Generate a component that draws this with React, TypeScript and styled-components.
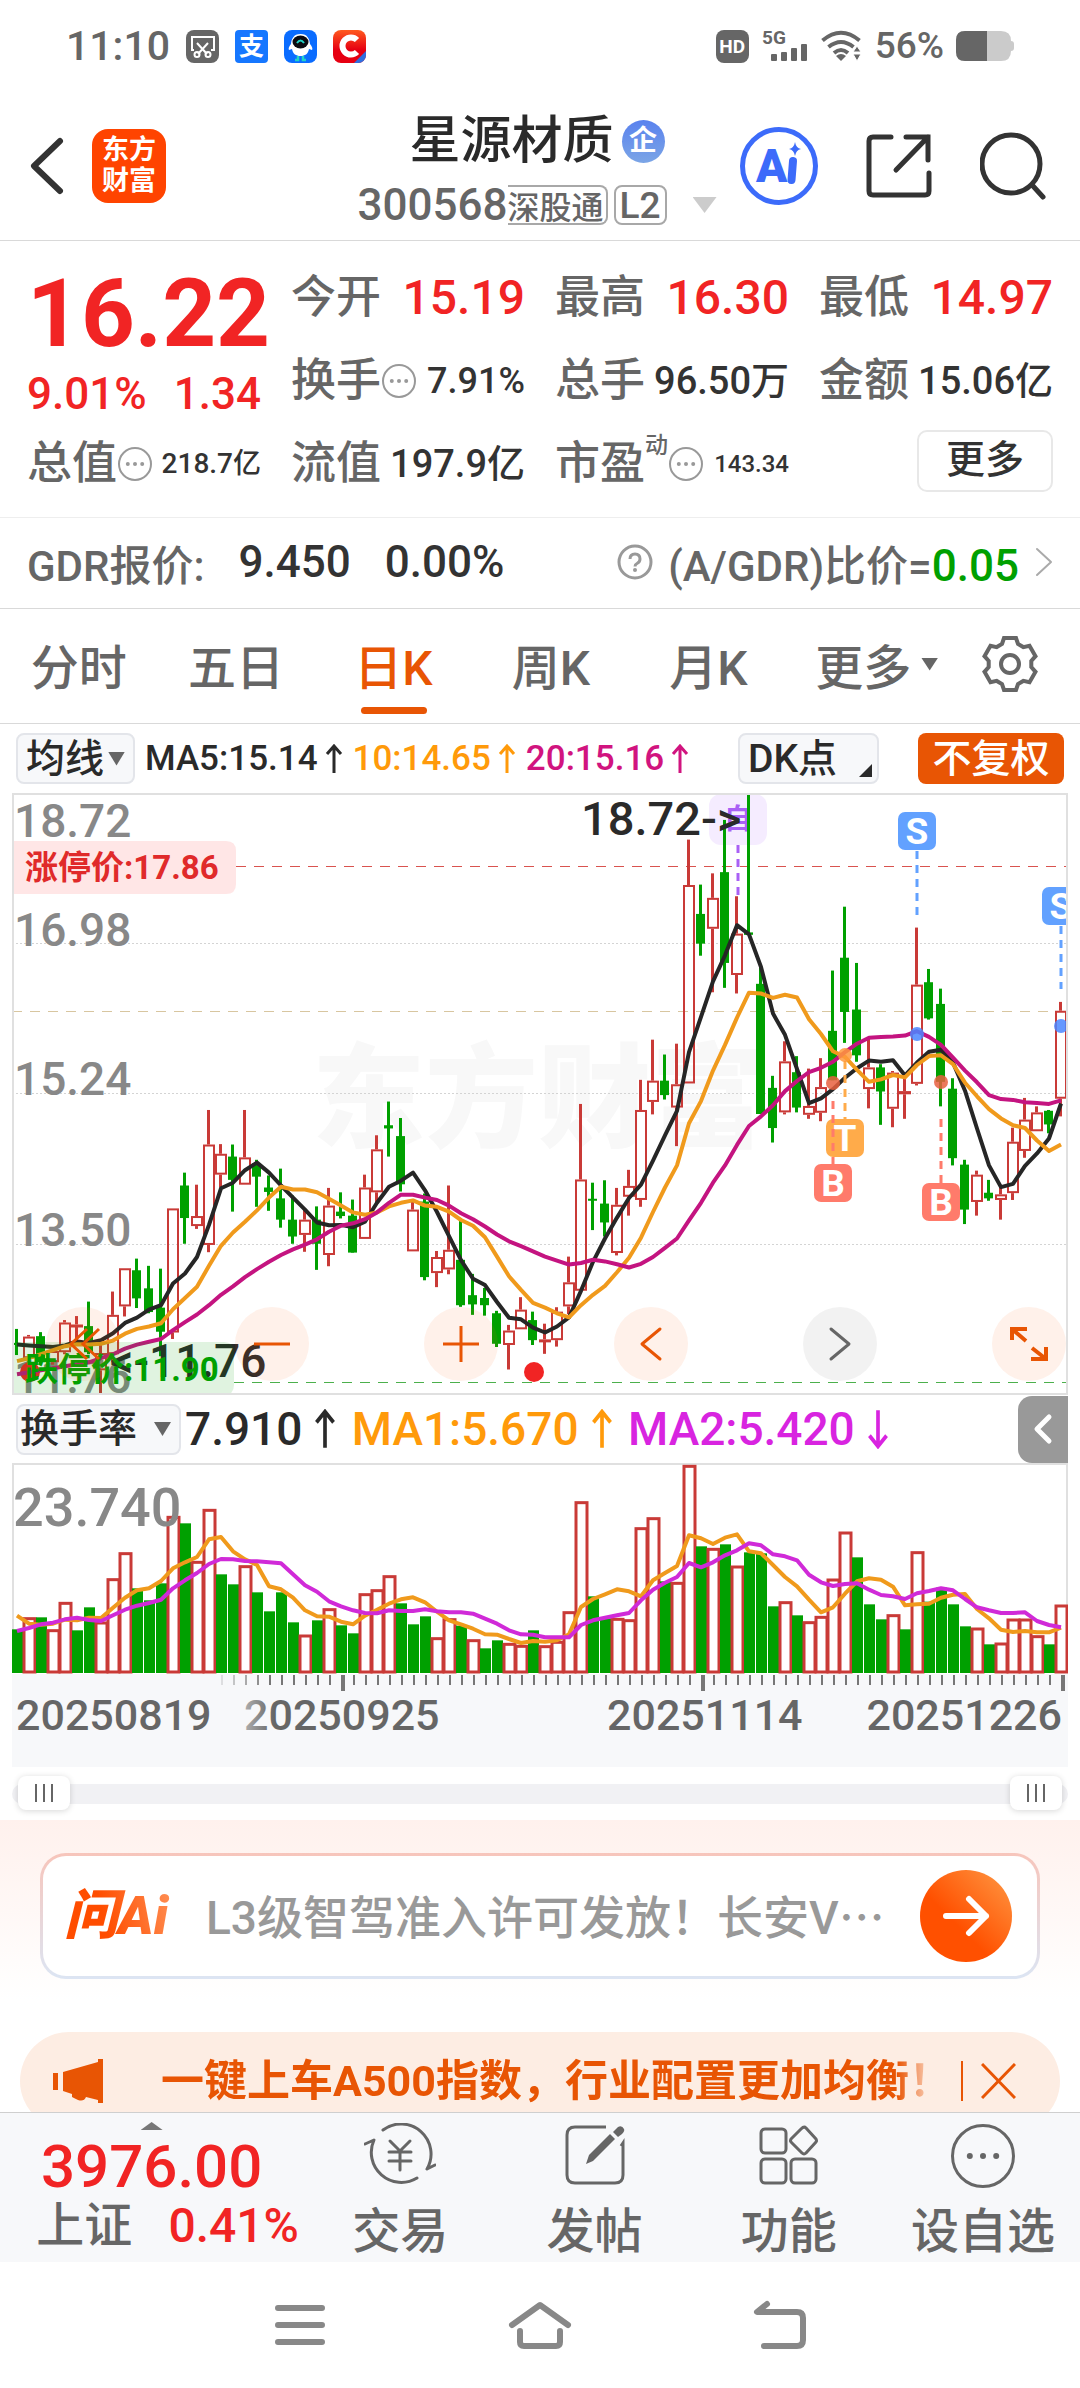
import React, { useState } from "react";
import styled, { createGlobalStyle, css } from "styled-components";

const C = {
  red: "#f12424",
  up: "#c93a37",
  down: "#00a000",
  green: "#00a000",
  ink: "#2a2a2a",
  text: "#666666",
  muted: "#888888",
  orange: "#e85504",
  amber: "#ff9a0a",
  magenta: "#d1147f",
  violet: "#d824e0",
  panel: "#f7f8fa",
  line: "#d9d9d9",
};

const GlobalStyle = createGlobalStyle`
  *, *::before, *::after { box-sizing: border-box; }
  html, body { margin: 0; padding: 0; background: #ffffff; }
  body, button, input, select {
    font-family: Roboto, "Noto Sans CJK SC", sans-serif;
    font-weight: 500;
  }
  body { color: ${C.text}; }
  button { border: 0; padding: 0; background: none; color: inherit; cursor: pointer; }
`;

const Page = styled.div`
  display: flex;
  flex-direction: column;
  width: 100%;
`;

/* ---------- status bar ---------- */

const StatusBar = styled.div`
  display: flex;
  align-items: center;
  justify-content: space-between;
  height: 92px;
  padding: 0 66px;
`;

const StatusGroup = styled.div<{ $gap: number }>`
  display: flex;
  align-items: center;
  gap: ${(p) => p.$gap}px;
`;

const Clock = styled.span`
  font-size: 41px;
  line-height: 42px;
`;

const Percent = styled.span`
  font-size: 37px;
  line-height: 38px;
`;

/* ---------- title bar ---------- */

const TitleBar = styled.header`
  display: flex;
  align-items: center;
  height: 149px;
  padding: 0 34px 0 28px;
  border-bottom: 1px solid ${C.line};
`;

const TitleSide = styled.div<{ $gap: number; $end?: boolean }>`
  flex: 1 1 0;
  display: flex;
  align-items: center;
  justify-content: ${(p) => (p.$end ? "flex-end" : "flex-start")};
  gap: ${(p) => p.$gap}px;
`;

const IconButton = styled.button`
  display: flex;
  align-items: center;
  justify-content: center;
`;

const Logo = styled.a`
  display: flex;
  align-items: center;
  justify-content: center;
  width: 74px;
  height: 74px;
  border-radius: 16px;
  background: #ff4400;
  color: #ffffff;
  font-size: 27px;
  line-height: 31px;
  font-weight: 700;
  text-align: center;
  text-decoration: none;
`;

const TitleCenter = styled.div`
  display: flex;
  flex-direction: column;
  align-items: center;
  padding-top: 12px;
`;

const StockName = styled.h1`
  display: flex;
  align-items: center;
  gap: 8px;
  margin: 0;
  color: ${C.ink};
  font-size: 51px;
  line-height: 66px;
  font-weight: 500;
`;

const NameBadge = styled.span`
  display: flex;
  align-items: center;
  justify-content: center;
  width: 43px;
  height: 43px;
  border-radius: 50%;
  background: linear-gradient(#5a82ee, #7ba5e6);
  color: #ffffff;
  font-size: 28px;
  line-height: 40px;
  font-weight: 700;
`;

const CodeRow = styled.div`
  display: flex;
  align-items: center;
  height: 62px;
  font-size: 44px;
`;

const CodeTag = styled.span<{ $open?: boolean }>`
  display: flex;
  align-items: center;
  height: 40px;
  margin-right: 6px;
  padding: 0 ${(p) => (p.$open ? 2 : 4)}px;
  border: 2px solid #a8a8a8;
  border-radius: 8px;
  font-size: ${(p) => (p.$open ? 32 : 37)}px;
  ${(p) =>
    p.$open &&
    css`
      border-left: 0;
      border-radius: 0 8px 8px 0;
      padding-left: 0;
    `}
`;

const Triangle = styled.span<{ $w: number; $h: number; $color: string; $up?: boolean }>`
  flex: none;
  width: ${(p) => p.$w}px;
  height: ${(p) => p.$h}px;
  background: ${(p) => p.$color};
  clip-path: ${(p) => (p.$up ? "polygon(0 100%, 50% 0, 100% 100%)" : "polygon(0 0, 100% 0, 50% 100%)")};
`;

const CodeArrow = styled(Triangle)`
  margin-left: 20px;
`;

const AiRound = styled.button`
  display: flex;
  align-items: center;
  justify-content: center;
  width: 78px;
  height: 78px;
  border: 5px solid #3c6bfa;
  border-radius: 50%;
`;

/* ---------- quote panel ---------- */

const Quote = styled.section`
  display: grid;
  grid-template-columns: repeat(4, minmax(0, 1fr));
  grid-template-rows: repeat(3, 83px);
  column-gap: 30px;
  padding: 15px 27px 12px;
  border-bottom: 1px solid #eeeeee;
`;

const PriceBlock = styled.div`
  grid-row: span 2;
  color: ${C.red};
`;

const Price = styled.div`
  height: 111px;
  font-size: 94px;
  line-height: 116px;
  font-weight: 700;
`;

const Change = styled.div`
  display: flex;
  justify-content: space-between;
  font-size: 44px;
  line-height: 54px;
`;

const Metric = styled.div`
  display: flex;
  align-items: center;
  justify-content: space-between;
  white-space: nowrap;
`;

const MetricLabel = styled.span`
  display: flex;
  align-items: center;
  font-size: 45px;
  line-height: 60px;
`;

const MetricValue = styled.span<{ $size: number; $red?: boolean }>`
  color: ${(p) => (p.$red ? C.red : "#333333")};
  font-size: ${(p) => p.$size}px;
  line-height: 60px;
`;

const Sup = styled.span`
  align-self: flex-start;
  font-size: 23px;
  line-height: 24px;
`;

const MoreButton = styled.button`
  justify-self: end;
  align-self: center;
  width: 136px;
  height: 62px;
  margin-bottom: 6px;
  padding-bottom: 2px;
  border: 2px solid #e8e8e8;
  border-radius: 10px;
  color: #333333;
  font-size: 39px;
  line-height: 56px;
`;

const GdrRow = styled.section`
  display: flex;
  align-items: center;
  height: 91px;
  padding: 0 27px 2px;
  border-bottom: 1px solid ${C.line};
  font-size: 42px;
  white-space: nowrap;
`;

const GdrValue = styled.span`
  margin-left: 34px;
  color: #333333;
  font-size: 44px;
`;

const GdrLink = styled.a`
  display: flex;
  align-items: center;
  margin-left: auto;
  color: ${C.text};
  text-decoration: none;
`;

const GdrFormula = styled.span`
  margin: 0 16px 0 14px;
`;

const Ratio = styled.span`
  color: ${C.green};
  font-size: 44px;
`;

/* ---------- period tabs ---------- */

const Tabs = styled.nav`
  display: grid;
  grid-template-columns: repeat(5, minmax(0, 158fr)) minmax(0, 180fr) minmax(0, 88fr);
  height: 115px;
  padding-right: 26px;
  border-bottom: 1px solid ${C.line};
`;

const Tab = styled.button<{ $on?: boolean }>`
  position: relative;
  display: flex;
  align-items: center;
  justify-content: center;
  gap: 10px;
  padding-bottom: 4px;
  color: ${(p) => (p.$on ? C.orange : C.text)};
  font-size: 48px;
  white-space: nowrap;
  ${(p) =>
    p.$on &&
    css`
      &::after {
        content: "";
        position: absolute;
        left: 50%;
        bottom: 9px;
        width: 66px;
        height: 7px;
        margin-left: -33px;
        border-radius: 4px;
        background: ${C.orange};
      }
    `}
`;

/* ---------- indicator rows ---------- */

const IndicatorRow = styled.div<{ $h: number; $size: number; $gap: number }>`
  display: flex;
  align-items: center;
  gap: ${(p) => p.$gap}px;
  height: ${(p) => p.$h}px;
  padding: 0 16px;
  font-size: ${(p) => p.$size}px;
  white-space: nowrap;
`;

const SelectBox = styled.label<{ $w: number; $push?: boolean }>`
  display: grid;
  align-items: center;
  width: ${(p) => p.$w}px;
  height: 51px;
  margin-left: ${(p) => (p.$push ? "auto" : "0")};
  border: 2px solid #e3e5ea;
  border-radius: 8px;
  background: ${C.panel};
  overflow: hidden;

  & > * {
    grid-area: 1 / 1;
  }
`;

const Select = styled.select<{ $pad: number }>`
  appearance: none;
  width: 100%;
  height: 100%;
  padding: 0 0 0 ${(p) => p.$pad}px;
  border: 0;
  background: none;
  color: ${C.ink};
  font-size: 39px;
  line-height: 46px;
`;

const SelectArrow = styled(Triangle)`
  justify-self: end;
  margin-right: 8px;
  pointer-events: none;
`;

const CornerMark = styled.span`
  justify-self: end;
  align-self: end;
  width: 13px;
  height: 13px;
  margin: 0 5px 5px 0;
  background: ${C.ink};
  clip-path: polygon(100% 0, 100% 100%, 0 100%);
  pointer-events: none;
`;

const Reading = styled.span<{ $color: string; $gap: number }>`
  display: flex;
  align-items: center;
  gap: ${(p) => p.$gap}px;
  color: ${(p) => p.$color};
`;

const AdjustButton = styled.button`
  width: 146px;
  height: 51px;
  margin-left: 29px;
  border-radius: 8px;
  background: ${C.orange};
  color: #ffffff;
  font-size: 39px;
  line-height: 50px;
`;

const CollapseButton = styled.button`
  display: flex;
  align-items: center;
  justify-content: center;
  width: 50px;
  height: 67px;
  margin: 0 -4px 0 auto;
  border-radius: 14px 0 0 14px;
  background: #999999;
`;

/* ---------- charts ---------- */

const ChartArea = styled.div`
  position: relative;
  margin: 0 12px;
`;

const ChartSvg = styled.svg`
  display: block;
  width: 100%;
  height: auto;
`;

const ChartControls = styled.div`
  position: absolute;
  left: 0;
  right: 0;
  bottom: 14px;
  display: flex;
  justify-content: space-between;
  padding: 0 2px 0 34px;
`;

const RoundButton = styled.button<{ $grey?: boolean }>`
  display: flex;
  align-items: center;
  justify-content: center;
  width: 74px;
  height: 74px;
  border-radius: 50%;
  background: ${(p) => (p.$grey ? "rgba(0, 0, 0, 0.05)" : "rgba(255, 105, 20, 0.09)")};
`;

const Range = styled.div`
  position: relative;
  height: 53px;
  margin: 0 12px;

  &::before {
    content: "";
    position: absolute;
    inset: 17px 0 16px;
    border-radius: 10px;
    background: #f1f1f4;
  }
`;

const thumb = css`
  appearance: none;
  width: 52px;
  height: 34px;
  border: 0;
  border-radius: 8px;
  background:
    linear-gradient(#666, #666) 17px 50% / 2px 18px no-repeat,
    linear-gradient(#666, #666) 25px 50% / 2px 18px no-repeat,
    linear-gradient(#666, #666) 33px 50% / 2px 18px no-repeat,
    #ffffff;
  box-shadow: 0 1px 6px rgba(0, 0, 0, 0.16);
  pointer-events: auto;
`;

const RangeInput = styled.input`
  position: absolute;
  inset: 0 6px;
  appearance: none;
  width: calc(100% - 12px);
  height: 52px;
  margin: 0;
  background: none;
  pointer-events: none;

  &::-webkit-slider-thumb {
    ${thumb}
  }
  &::-moz-range-thumb {
    ${thumb}
  }
`;

/* ---------- assistant card ---------- */

const Assistant = styled.section`
  height: 212px;
  padding: 33px 40px;
  background: linear-gradient(#fff1ed, #ffffff 85%);
`;

const AskCard = styled.form`
  display: flex;
  align-items: center;
  height: 126px;
  padding: 0 25px 0 21px;
  border: 3px solid transparent;
  border-radius: 26px;
  background:
    linear-gradient(#ffffff, #ffffff) padding-box,
    linear-gradient(#f7c5bb, #dce5f3) border-box;
`;

const AskLogo = styled.span`
  flex: none;
  width: 142px;
  background: linear-gradient(75deg, #ff4d00 30%, #ff9055 78%);
  background-clip: text;
  color: transparent;
  font-size: 54px;
  line-height: 64px;
  font-weight: 900;
  font-style: italic;
`;

const AskInput = styled.input`
  flex: 1;
  min-width: 0;
  height: 80px;
  padding: 4px 0 0;
  border: 0;
  outline: 0;
  background: none;
  color: ${C.ink};
  font-size: 46px;

  &::placeholder {
    color: #999999;
    opacity: 1;
  }
`;

const AskSend = styled.button`
  display: flex;
  align-items: center;
  justify-content: center;
  flex: none;
  width: 92px;
  height: 92px;
  border-radius: 50%;
  background: linear-gradient(45deg, #ff5000 40%, #ff9a45);
`;

const NoticeWrap = styled.section`
  height: 80px;
  padding: 0 20px;
  overflow: hidden;
`;

const Notice = styled.div`
  display: flex;
  align-items: center;
  height: 98px;
  padding: 0 44px 0 32px;
  border-radius: 49px;
  background: #fdede3;
`;

const NoticeText = styled.a`
  flex: 1;
  min-width: 0;
  margin-left: 56px;
  overflow: hidden;
  color: ${C.orange};
  font-size: 43px;
  line-height: 60px;
  font-weight: 700;
  text-decoration: none;
  white-space: nowrap;
  mask-image: linear-gradient(90deg, #000 92%, rgba(0, 0, 0, 0.2) 96%);
`;

const NoticeRule = styled.span`
  width: 2px;
  height: 40px;
  margin-right: 18px;
  background: ${C.orange};
`;

/* ---------- bottom bar ---------- */

const BottomBar = styled.footer`
  display: grid;
  grid-template-columns: minmax(0, 303fr) repeat(4, minmax(0, 194fr));
  height: 150px;
  border-top: 1px solid #cfcfcf;
  background: ${C.panel};
`;

const IndexCell = styled.button`
  display: flex;
  flex-direction: column;
  align-items: center;
  padding-top: 9px;
`;

const IndexValue = styled.span`
  color: ${C.red};
  font-size: 60px;
  line-height: 74px;
`;

const IndexChange = styled.span`
  display: flex;
  align-items: center;
  gap: 36px;
  font-size: 48px;
  line-height: 44px;
  padding-left: 32px;
  white-space: nowrap;
`;

const IndexPct = styled.span`
  color: ${C.red};
`;

const Action = styled.button`
  display: flex;
  flex-direction: column;
  align-items: center;
  gap: 10px;
  padding-top: 10px;
  font-size: 48px;
  line-height: 66px;
  white-space: nowrap;
`;

const SystemNav = styled.nav`
  display: grid;
  grid-template-columns: repeat(3, minmax(0, 1fr));
  align-items: center;
  height: 126px;
  padding: 0 16.6667%;
`;

/* ---------- icons ---------- */

const ScissorsIcon = () => (
  <svg width="33" height="33" viewBox="0 0 33 33" aria-hidden="true">
    <rect width="33" height="33" rx="8" fill="#666" />
    <g fill="none" stroke="#fff" strokeWidth="2">
      <path d="M8 20H6V7h22v13h-3" />
      <path d="M11 13l10 11M22 13L12 24" />
      <circle cx="11" cy="24.500" r="2.500" />
      <circle cx="22" cy="24.500" r="2.500" />
    </g>
  </svg>
);

const AppBadge = styled.span<{ $bg: string; $radius: number; $size: number }>`
  display: flex;
  align-items: center;
  justify-content: center;
  width: 33px;
  height: 33px;
  border-radius: ${(p) => p.$radius}px;
  background: ${(p) => p.$bg};
  color: #ffffff;
  font-size: ${(p) => p.$size}px;
  line-height: 33px;
  font-weight: 700;
`;

const RobotIcon = () => (
  <svg width="33" height="33" viewBox="0 0 33 33" aria-hidden="true">
    <rect width="33" height="33" rx="8" fill="#0a6cff" />
    <path d="M16.500 4c7 0 9 5 9.500 10 2 2 3 5 2 6l-3-1c-1 5-4 7-8.500 7S9 24 8 19l-3 1c-1-1 0-4 2-6 .5-5 2.500-10 9.500-10z" fill="#fff" />
    <ellipse cx="16.500" cy="12" rx="8" ry="6.500" fill="#0b0b12" />
    <path d="M13 13q3.500-5 7 0" fill="none" stroke="#22d3c5" strokeWidth="2" />
    <path d="M14 26v4h-3M19 26v4h3" fill="none" stroke="#22d3c5" strokeWidth="2.500" />
  </svg>
);

const ClipIcon = () => (
  <svg width="33" height="33" viewBox="0 0 33 33" aria-hidden="true">
    <linearGradient id="clipBg" x1="0" x2="0" y1="0" y2="1">
      <stop offset="0" stopColor="#ff5a1f" />
      <stop offset="0.6" stopColor="#e60012" />
    </linearGradient>
    <clipPath id="clipShape"><rect width="33" height="33" rx="8" /></clipPath>
    <g clipPath="url(#clipShape)">
      <rect width="33" height="33" fill="url(#clipBg)" />
      <path d="M24 10A8.500 8.500 0 1 0 24 22" fill="none" stroke="#fff" strokeWidth="6" />
      <path d="M20 34L34 20V34Z" fill="#2f6fe0" />
    </g>
  </svg>
);

const SignalIcon = () => (
  <svg width="48" height="34" viewBox="0 0 48 34" aria-hidden="true">
    <text x="1" y="15" fontSize="19" fontWeight="700" fill="#666">5G</text>
    <g fill="#666">
      <rect x="10" y="25" width="6" height="7" rx="1" />
      <rect x="20" y="23" width="6" height="9" rx="1" />
      <rect x="30" y="19" width="6" height="13" rx="1" />
      <rect x="40" y="15" width="6" height="17" rx="1" />
    </g>
  </svg>
);

const WifiIcon = () => (
  <svg width="42" height="32" viewBox="0 0 42 32" aria-hidden="true">
    <g fill="none" stroke="#666" strokeWidth="4">
      <path d="M1.500 10.500Q20 -5 38.500 10.500" />
      <path d="M7.500 17Q20 7 32.500 17" />
      <path d="M13 23Q20 17 27 23" />
    </g>
    <path d="M15 26q5-4 10 0l-5 5z" fill="#666" />
    <path d="M32 22l4-6 4 6zM32 24l4 7 4-7z" fill="#666" stroke="#fff" />
  </svg>
);

const BatteryIcon = () => (
  <svg width="58" height="30" viewBox="0 0 58 30" aria-hidden="true">
    <path d="M9 0h36q10 0 10 10v0q3 0 3 3v4q0 3-3 3 0 10-10 10H9q-9 0-9-9V9q0-9 9-9z" fill="#cbcbcb" />
    <path d="M9 0h22v30H9q-9 0-9-9V9q0-9 9-9z" fill="#666" />
  </svg>
);

const Chevron = ({ w, h, stroke, color, right }: { w: number; h: number; stroke: number; color: string; right?: boolean }) => {
  const a = stroke;
  const near = right ? a : w - a;
  const far = right ? w - a : a;
  return (
    <svg width={w} height={h} viewBox={`0 0 ${w} ${h}`} aria-hidden="true">
      <path d={`M${near} ${a}L${far} ${h / 2}L${near} ${h - a}`} fill="none" stroke={color} strokeWidth={stroke} strokeLinecap="round" strokeLinejoin="round" />
    </svg>
  );
};

const ArrowIcon = ({ down, big }: { down?: boolean; big?: boolean }) => (
  <svg width={big ? 22 : 18} height={big ? 40 : 30} viewBox="0 0 18 30" preserveAspectRatio="none" aria-hidden="true">
    <path d={down ? "M9 1V28M2 20L9 28L16 20" : "M9 29V2M2 10L9 2L16 10"} fill="none" stroke="currentColor" strokeWidth="3" />
  </svg>
);

const AiMark = () => (
  <svg width="50" height="50" viewBox="0 0 50 50" aria-hidden="true">
    <text x="2" y="41" fontSize="46" fontWeight="900" fill="#3c6bfa">A</text>
    <path d="M39 20L37.500 39" stroke="#3c6bfa" strokeWidth="8" strokeLinecap="round" />
    <path d="M41 1q1 6 6 7q-5 1-6 7q-1-6-6-7q5-1 6-7z" fill="#3c6bfa" />
  </svg>
);

const ShareIcon = () => (
  <svg width="66" height="66" viewBox="0 0 66 66" fill="none" stroke="#333" strokeWidth="5" aria-hidden="true">
    <path d="M25 4H7Q3 4 3 8V58Q3 62 7 62H59Q63 62 63 58V40" strokeLinecap="round" />
    <path d="M40 4H62V27M62 4L30 37" strokeLinecap="round" />
  </svg>
);

const SearchIcon = () => (
  <svg width="66" height="68" viewBox="0 0 66 68" fill="none" stroke="#333" strokeWidth="5" aria-hidden="true">
    <circle cx="31" cy="32" r="29" />
    <path d="M53 54L63 65" strokeLinecap="round" />
  </svg>
);

const DotsCircle = ({ size, stroke, color, r }: { size: number; stroke: number; color: string; r: number }) => (
  <svg width={size} height={size} viewBox={`0 0 ${size} ${size}`} aria-hidden="true">
    <circle cx={size / 2} cy={size / 2} r={(size - stroke) / 2 - 1} fill="none" stroke={color} strokeWidth={stroke} />
    {[-1, 0, 1].map((k) => (
      <circle key={k} cx={size / 2 + (k * size) / 5} cy={size / 2} r={r} fill={color} />
    ))}
  </svg>
);

const HelpIcon = () => (
  <svg width="38" height="38" viewBox="0 0 38 38" aria-hidden="true">
    <circle cx="19" cy="19" r="16" fill="none" stroke="#999" strokeWidth="3" />
    <path d="M14 16q0-5 5-5t5 5q0 3-3 4.500-2 1-2 3" fill="none" stroke="#999" strokeWidth="3" />
    <circle cx="19" cy="27" r="2" fill="#999" />
  </svg>
);

const GEAR_PATH = (() => {
  const tooth: [number, number][] = [[-8, -20], [-6, -26], [6, -26], [8, -20]];
  const pts: string[] = [];
  for (let k = 0; k < 6; k++) {
    const a = (k * Math.PI) / 3;
    tooth.forEach(([x, y]) => {
      const px = 30 + x * Math.cos(a) - y * Math.sin(a);
      const py = 30 + x * Math.sin(a) + y * Math.cos(a);
      pts.push(`${px.toFixed(1)} ${py.toFixed(1)}`);
    });
  }
  return `M${pts.join("L")}Z`;
})();

const GearIcon = () => (
  <svg width="60" height="60" viewBox="0 0 60 60" fill="none" stroke="#666" strokeWidth="4" aria-hidden="true">
    <path d={GEAR_PATH} />
    <circle cx="30" cy="30" r="9" />
  </svg>
);

const ExpandIcon = () => (
  <svg width="40" height="40" viewBox="0 0 40 40" fill="none" stroke={C.orange} strokeWidth="4" aria-hidden="true">
    <path d="M3 16V5H18M3 5L17 17" />
    <path d="M22 35H37V23M37 35L23 24" />
  </svg>
);

const PlusMinus = ({ plus }: { plus?: boolean }) => (
  <svg width="38" height="38" viewBox="0 0 38 38" stroke={C.orange} strokeWidth="3" aria-hidden="true">
    <path d={plus ? "M1 19H37M19 1V37" : "M1 19H37"} />
  </svg>
);

const DoubleChevron = () => (
  <svg width="36" height="36" viewBox="0 0 36 36" fill="none" stroke={C.orange} strokeWidth="3" aria-hidden="true">
    <path d="M22 3L6 18L22 33M34 3L18 18L34 33" />
  </svg>
);

const SendArrow = () => (
  <svg width="48" height="42" viewBox="0 0 48 42" fill="none" stroke="#fff" strokeWidth="6" strokeLinecap="round" strokeLinejoin="round" aria-hidden="true">
    <path d="M4 21H44M27 4L44 21L27 38" />
  </svg>
);

const MegaphoneIcon = () => (
  <svg width="53" height="44" viewBox="0 0 53 44" fill={C.orange} aria-hidden="true">
    <rect x="1" y="14" width="5" height="17" />
    <path d="M11 13L46 3V0h5v44h-5v-3l-12-3q-2 5-8 3l-6-3v-3l-9-3z" />
  </svg>
);

const CloseIcon = () => (
  <svg width="35" height="36" viewBox="0 0 35 36" stroke={C.orange} strokeWidth="3" aria-hidden="true">
    <path d="M1 1L34 35M34 1L1 35" />
  </svg>
);

const TradeIcon = () => (
  <svg width="72" height="66" viewBox="0 0 72 66" fill="none" stroke="#666" strokeWidth="3" strokeLinecap="round" strokeLinejoin="round" aria-hidden="true">
    <path d="M19 7A30 30 0 0 1 63 46L71 42" />
    <path d="M53 55A30 30 0 0 1 10 17L1 21" />
    <path d="M26 18L36 28L46 18M36 28V47M25 29H47M25 38H47" />
  </svg>
);

const PostIcon = () => (
  <svg width="62" height="66" viewBox="0 0 62 66" fill="none" stroke="#666" strokeWidth="3" aria-hidden="true">
    <path d="M42 4H11Q3 4 3 12V52Q3 60 11 60H51Q59 60 59 52V20L57 23" />
    <path d="M22 41L25 32L46 11L51 16L29 38Z" fill="#666" stroke="none" />
    <path d="M49 9L54 4Q58 2 60 6Q61 8 58 11L54 14Z" fill="#666" stroke="none" />
  </svg>
);

const GridIcon = () => (
  <svg width="60" height="66" viewBox="0 0 60 66" fill="none" stroke="#666" strokeWidth="3" strokeLinejoin="round" aria-hidden="true">
    <rect x="2" y="6" width="25" height="24" rx="4" />
    <rect x="2" y="36" width="25" height="24" rx="4" />
    <rect x="32" y="36" width="25" height="24" rx="4" />
    <path d="M47 5Q45 3 42 6L32 16Q31 18 32 19L43 30Q45 32 47 30L57 19Q58 18 57 16Z" />
  </svg>
);

const MenuIcon = () => (
  <svg width="50" height="42" viewBox="0 0 50 42" stroke="#888" strokeWidth="6" strokeLinecap="round" aria-hidden="true">
    <path d="M3 4H47M3 21H47M3 38H47" />
  </svg>
);

const HomeIcon = () => (
  <svg width="64" height="50" viewBox="0 0 64 50" fill="none" stroke="#888" strokeWidth="6" strokeLinecap="round" strokeLinejoin="round" aria-hidden="true">
    <path d="M4 25L32 5L60 25" />
    <path d="M12 31V42Q12 46 16 46H48Q52 46 52 42V31" />
  </svg>
);

const BackIcon = () => (
  <svg width="56" height="50" viewBox="0 0 56 50" fill="none" stroke="#888" strokeWidth="6" strokeLinecap="round" strokeLinejoin="round" aria-hidden="true">
    <path d="M15 4L5 12H45Q51 12 51 18V40Q51 46 45 46H12" />
  </svg>
);

/* ---------- market data ---------- */

type Side = "r" | "g";
type Candle = [Side, number, number, number, number];

/* side, high, body top, body bottom, low: ticks on a scale where 33 is 18.72 and 1529 is 11.76 */
const CANDLES: Candle[] = [
  ["g", 1367, 1402, 1406, 1432], ["r", 1382, 1386, 1440, 1445], ["g", 1375, 1385, 1450, 1455], ["r", 1418, 1422, 1450, 1456],
  ["r", 1345, 1351, 1425, 1430], ["r", 1335, 1356, 1360, 1395], ["g", 1299, 1360, 1425, 1430], ["r", 1400, 1427, 1470, 1529],
  ["r", 1274, 1332, 1430, 1450], ["r", 1216, 1216, 1311, 1336], ["g", 1192, 1221, 1291, 1315], ["g", 1210, 1266, 1325, 1328],
  ["g", 1217, 1314, 1374, 1435], ["r", 1067, 1067, 1376, 1392], ["g", 978, 1010, 1091, 1155], ["r", 1008, 1086, 1111, 1118],
  ["r", 822, 908, 1158, 1176], ["r", 907, 931, 983, 1015], ["g", 908, 938, 996, 1075], ["r", 822, 940, 1008, 1008],
  ["g", 946, 955, 988, 1063], ["g", 985, 1015, 1026, 1073], ["g", 968, 1042, 1095, 1115], ["g", 1035, 1095, 1137, 1155],
  ["r", 1070, 1095, 1133, 1175], ["g", 1062, 1095, 1155, 1220], ["r", 1016, 1060, 1183, 1211], ["g", 1027, 1075, 1086, 1092],
  ["g", 1045, 1085, 1177, 1177], ["r", 983, 1015, 1143, 1143], ["r", 885, 920, 1027, 1055], ["g", 801, 860, 868, 938],
  ["g", 842, 887, 1007, 1025], ["r", 1050, 1070, 1174, 1174], ["g", 1030, 1050, 1238, 1246], ["r", 1173, 1188, 1228, 1263],
  ["r", 1010, 1170, 1219, 1231], ["g", 1095, 1195, 1308, 1312], ["g", 1230, 1283, 1306, 1332], ["g", 1265, 1290, 1308, 1334],
  ["g", 1322, 1328, 1404, 1412], ["r", 1357, 1371, 1407, 1468], ["r", 1288, 1319, 1368, 1368], ["g", 1324, 1345, 1395, 1407],
  ["r", 1354, 1393, 1397, 1429], ["r", 1313, 1324, 1395, 1411], ["r", 1187, 1251, 1311, 1330], ["r", 807, 995, 1272, 1272],
  ["g", 1003, 1043, 1048, 1121], ["g", 997, 1055, 1102, 1137], ["r", 1016, 1058, 1178, 1184], ["r", 971, 1011, 1038, 1085],
  ["r", 747, 822, 1046, 1063], ["r", 647, 749, 802, 833], ["g", 684, 749, 785, 796], ["r", 657, 758, 816, 912],
  ["r", 149, 262, 756, 756], ["g", 261, 334, 408, 438], ["r", 233, 294, 371, 529], ["g", 100, 230, 456, 518],
  ["r", 290, 383, 486, 532], ["g", 33, 380, 386, 386], ["g", 460, 508, 832, 832], ["g", 737, 767, 867, 903],
  ["r", 651, 701, 828, 833], ["g", 688, 728, 816, 828], ["r", 719, 812, 834, 844], ["r", 693, 765, 829, 850],
  ["g", 475, 625, 748, 748], ["g", 316, 443, 578, 655], ["g", 456, 572, 686, 702], ["r", 642, 716, 770, 818],
  ["g", 708, 716, 776, 859], ["r", 725, 729, 819, 865], ["r", 736, 775, 783, 844], ["r", 368, 510, 757, 761],
  ["g", 471, 504, 594, 597], ["g", 520, 558, 752, 813], ["g", 743, 769, 942, 960], ["g", 946, 958, 1070, 1106],
  ["r", 973, 983, 1051, 1085], ["g", 996, 1028, 1042, 1048], ["r", 1014, 1032, 1046, 1095], ["r", 866, 901, 1029, 1046],
  ["r", 792, 846, 924, 941], ["r", 813, 828, 875, 875], ["g", 822, 824, 858, 880], ["r", 553, 575, 794, 838],
];

const MA5 = [1406, 1408, 1410, 1412, 1408, 1398, 1402, 1395, 1378, 1352, 1339, 1319, 1308, 1254, 1229, 1188, 1108, 1017, 1003, 972, 953, 978, 1010, 1040, 1070, 1102, 1109, 1108, 1114, 1100, 1053, 1013, 998, 978, 1022, 1076, 1136, 1196, 1242, 1258, 1300, 1339, 1343, 1364, 1376, 1361, 1338, 1272, 1200, 1142, 1090, 1041, 1008, 948, 885, 824, 678, 590, 502, 437, 362, 385, 466, 582, 635, 720, 805, 793, 770, 742, 718, 699, 702, 698, 736, 704, 677, 672, 704, 774, 868, 960, 1014, 1006, 961, 930, 893, 806];
const MA10 = [1447, 1440, 1430, 1420, 1410, 1405, 1406, 1404, 1396, 1379, 1367, 1361, 1353, 1318, 1290, 1262, 1210, 1160, 1127, 1100, 1072, 1040, 1013, 1020, 1020, 1027, 1043, 1060, 1077, 1083, 1077, 1062, 1053, 1047, 1060, 1063, 1075, 1096, 1110, 1139, 1187, 1236, 1270, 1302, 1314, 1328, 1338, 1308, 1282, 1260, 1226, 1190, 1140, 1076, 1015, 960, 855, 800, 724, 660, 592, 530, 532, 543, 535, 542, 596, 633, 676, 690, 722, 752, 746, 735, 741, 710, 688, 686, 708, 754, 788, 820, 843, 860, 867, 898, 924, 908];
const MA20 = [1480, 1475, 1470, 1465, 1460, 1455, 1450, 1440, 1430, 1416, 1406, 1399, 1392, 1370, 1350, 1331, 1308, 1282, 1261, 1238, 1218, 1200, 1183, 1169, 1157, 1144, 1125, 1110, 1104, 1094, 1077, 1053, 1033, 1033, 1040, 1046, 1060, 1079, 1094, 1112, 1132, 1149, 1161, 1174, 1187, 1197, 1207, 1203, 1195, 1199, 1206, 1214, 1205, 1188, 1165, 1142, 1097, 1053, 1003, 960, 909, 862, 838, 810, 775, 750, 728, 717, 702, 678, 657, 642, 640, 639, 637, 626, 640, 660, 692, 724, 753, 785, 795, 797, 803, 805, 807, 798];

/* turnover bars, on a scale where 221 is 23.740 and 848 is zero */
const VOLUME: [Side, number][] = [
  ["g", 717], ["r", 682], ["g", 681], ["r", 718], ["r", 636], ["g", 720], ["g", 651], ["r", 695], ["r", 565], ["r", 487],
  ["g", 594], ["g", 630], ["g", 579], ["r", 378], ["g", 399], ["r", 513], ["r", 357], ["g", 552], ["g", 582], ["r", 526],
  ["g", 606], ["g", 663], ["g", 606], ["g", 696], ["r", 734], ["g", 690], ["r", 655], ["g", 705], ["g", 729], ["r", 610],
  ["r", 598], ["r", 556], ["g", 639], ["g", 702], ["g", 678], ["r", 742], ["r", 685], ["g", 706], ["r", 748], ["g", 774],
  ["g", 750], ["r", 759], ["r", 765], ["g", 720], ["r", 766], ["r", 753], ["r", 664], ["r", 334], ["g", 618], ["g", 684],
  ["r", 684], ["r", 688], ["r", 412], ["r", 382], ["g", 573], ["r", 576], ["r", 225], ["g", 468], ["r", 474], ["g", 462],
  ["r", 527], ["g", 486], ["g", 489], ["g", 648], ["r", 634], ["g", 675], ["r", 694], ["r", 678], ["r", 566], ["r", 425],
  ["g", 501], ["g", 642], ["g", 687], ["r", 673], ["g", 717], ["r", 484], ["g", 634], ["g", 592], ["g", 642], ["g", 708],
  ["r", 713], ["g", 762], ["r", 758], ["r", 686], ["r", 686], ["r", 736], ["g", 762], ["r", 644],
];
const VMA1 = [676, 700, 703, 700, 688, 690, 682, 683, 652, 622, 600, 594, 572, 534, 516, 500, 447, 440, 483, 507, 524, 588, 597, 622, 660, 678, 679, 694, 702, 676, 658, 640, 627, 621, 636, 664, 690, 702, 715, 732, 733, 746, 758, 752, 754, 750, 732, 650, 626, 612, 597, 603, 618, 570, 548, 527, 435, 444, 461, 442, 432, 483, 489, 524, 560, 588, 628, 666, 651, 610, 573, 564, 568, 589, 645, 642, 640, 622, 613, 611, 656, 684, 718, 725, 722, 726, 726, 712];
const VMA2 = [722, 713, 702, 697, 687, 682, 689, 692, 675, 658, 646, 638, 628, 594, 570, 548, 521, 506, 507, 512, 513, 516, 519, 552, 585, 604, 633, 648, 660, 668, 669, 660, 662, 662, 657, 663, 666, 666, 670, 685, 700, 720, 732, 733, 741, 741, 741, 704, 690, 682, 675, 668, 630, 598, 577, 560, 518, 531, 516, 495, 480, 459, 465, 492, 498, 510, 553, 576, 587, 581, 579, 598, 614, 618, 626, 609, 602, 594, 600, 626, 651, 660, 668, 668, 666, 692, 704, 711];

const cx = (i: number) => 5 + 12 * i;
const priceY = (v: number) => ((v - 33) / 1496) * 601;
const volY = (v: number) => (v - 221) / 3 + 1;
const toLine = (vals: number[], y: (v: number) => number) => vals.map((v, i) => `${cx(i)},${y(v).toFixed(1)}`).join(" ");

const CandleMark = ({ candle, x }: { candle: Candle; x: number }) => {
  const [side, high, top, bottom, low] = candle;
  const h = priceY(high);
  const t = priceY(top);
  const b = priceY(bottom);
  const l = priceY(low);
  if (side === "g") {
    return (
      <g fill={C.down}>
        <rect x={x - 2} y={h} width="3" height={l - h} />
        <rect x={x - 5} y={t} width="9" height={Math.max(2, b - t)} />
      </g>
    );
  }
  return (
    <g>
      <rect x={x - 2} y={h} width="3" height={t - h} fill={C.up} />
      <rect x={x - 2} y={b} width="3" height={l - b} fill={C.up} />
      <rect x={x - 5} y={t + 1} width="10" height={Math.max(1, b - t - 2)} fill="none" stroke={C.up} strokeWidth="2" />
    </g>
  );
};

const Flag = ({ x, y, letter, color, from, to }: { x: number; y: number; letter: string; color: string; from: number; to: number }) => (
  <g>
    <path d={`M${x} ${from}V${to}`} stroke={color} strokeWidth="3" strokeDasharray="8 6" />
    <rect x={x - 19} y={y - 19} width="38" height="38" rx="7" fill={color} />
    <text x={x} y={y + 13} fontSize="37" fontWeight="700" fill="#fff" textAnchor="middle">{letter}</text>
  </g>
);

const PRICE_LABELS: [string, number][] = [["18.72", 44], ["16.98", 153], ["15.24", 302], ["13.50", 453], ["11.76", 600]];

const PriceChart = () => (
  <ChartSvg viewBox="0 0 1056 602" role="img" aria-label="日K线图">
    <clipPath id="plot"><rect width="1056" height="602" /></clipPath>
    <g clipPath="url(#plot)">
      <text x="300" y="345" fontSize="113" fontWeight="900" fill="#f8f8f8">东方财富</text>
      <g stroke="#d4d4d4" strokeWidth="1" strokeDasharray="2 2">
        <path d="M0 150.500H1056M0 300.500H1056M0 451.500H1056" />
      </g>
      <path d="M0 218.500H1056" stroke="#d8c6a0" strokeWidth="1" strokeDasharray="10 8" />
      <path d="M224 73.500H1056" stroke="#d9534f" strokeWidth="1" strokeDasharray="10 8" />
      <path d="M222 589.500H1056" stroke="#4cb04c" strokeWidth="1" strokeDasharray="10 8" />
      {PRICE_LABELS.map(([t, y]) => (
        <text key={t} x="2" y={y} fontSize="46" fill={C.muted}>{t}</text>
      ))}
      <path d="M0 48H214Q224 48 224 58V91Q224 101 214 101H0Z" fill="#ffe6e6" />
      <text x="13" y="86" fontSize="33" fontWeight="700" fill="#e02a2a">涨停价:17.86</text>
      <rect x="697" y="1" width="58" height="51" rx="12" fill="#f5ecff" />
      <text x="726" y="36" fontSize="28" fontWeight="700" fill="#a960f5" textAnchor="middle">自</text>
      <path d="M726 52V104" stroke="#a960f5" strokeWidth="3" strokeDasharray="8 6" />
      {CANDLES.map((c, i) => <CandleMark key={i} candle={c} x={cx(i)} />)}
      <text x="98" y="584" fontSize="46" fill={C.ink}>&lt;-11.76</text>
      <text x="569" y="42" fontSize="47" fill={C.ink}>18.72-&gt;</text>
      <circle cx="522" cy="579" r="10" fill={C.red} />
      <circle cx="18" cy="579" r="10" fill={C.red} />
      <g fill="none" strokeWidth="4" strokeLinejoin="round">
        <polyline points={toLine(MA5, priceY)} stroke="#262626" />
        <polyline points={toLine(MA10, priceY)} stroke="#f09a1c" />
        <polyline points={toLine(MA20, priceY)} stroke="#c41480" />
      </g>
      <Flag x={905} y={38} letter="S" color="#62a1ff" from={58} to={122} />
      <Flag x={1049} y={113} letter="S" color="#62a1ff" from={133} to={196} />
      <Flag x={833} y={345} letter="T" color="#ffab4a" from={268} to={326} />
      <Flag x={821} y={390} letter="B" color="#ff7b6b" from={308} to={372} />
      <Flag x={929} y={409} letter="B" color="#ff7b6b" from={326} to={390} />
      <g fillOpacity="0.85">
        <circle cx="905" cy="241" r="7" fill="#4a86ff" />
        <circle cx="1049" cy="233" r="7" fill="#4a86ff" />
        <circle cx="833" cy="262" r="7" fill="#ff9a3c" />
        <circle cx="821" cy="290" r="7" fill="#e8603f" />
        <circle cx="929" cy="289" r="7" fill="#e8603f" />
      </g>
      <path d="M0 549H212Q222 549 222 559V592Q222 602 212 602H0Z" fill="#00a000" fillOpacity="0.12" />
      <text x="13" y="588" fontSize="33" fontWeight="700" fill={C.green}>跌停价:11.90</text>
    </g>
    <rect x="1" y="1" width="1054" height="600" fill="none" stroke="#e0e0e0" strokeWidth="2" />
  </ChartSvg>
);

const TICKS = Array.from({ length: 71 }, (_, k) => k + 17);
const MAJOR = [27, 57, 87];

const VolumeChart = () => (
  <ChartSvg viewBox="0 0 1056 304" role="img" aria-label="换手率">
    <linearGradient id="fade" gradientUnits="userSpaceOnUse" x1="228" x2="262" y1="0" y2="0">
      <stop offset="0" stopColor="#b8b8b8" />
      <stop offset="1" stopColor="#666" />
    </linearGradient>
    <rect y="211" width="1056" height="93" fill={C.panel} />
    <path d="M1 210V1H1055V210" fill="none" stroke="#e0e0e0" strokeWidth="2" />
    {VOLUME.map(([side, v], i) =>
      side === "g" ? (
        <rect key={i} x={cx(i) - 5} y={volY(v)} width="11" height={210 - volY(v)} fill={C.down} />
      ) : (
        <rect key={i} x={cx(i) - 5} y={volY(v) + 1} width="11" height={208 - volY(v)} fill="#fff" stroke={C.up} strokeWidth="3" />
      ),
    )}
    <g fill="none" strokeWidth="4" strokeLinejoin="round">
      <polyline points={toLine(VMA1, volY)} stroke="#f09a1c" />
      <polyline points={toLine(VMA2, volY)} stroke="#d02ad8" />
    </g>
    <text x="1" y="63" fontSize="54" fill={C.muted}>23.740</text>
    {TICKS.map((i) => {
      const major = MAJOR.includes(i);
      return (
        <rect key={i} x={cx(i)} y="212" width={major ? 4 : 2} height={major ? 16 : 10} fill="#777" opacity={Math.min(1, (i - 16) / 5)} />
      );
    })}
    <g fontSize="43" fill="#666">
      <text x="4" y="267">20250819</text>
      <text x="232" y="267" fill="url(#fade)">20250925</text>
      <text x="595" y="267">20251114</text>
      <text x="1050" y="267" textAnchor="end">20251226</text>
    </g>
  </ChartSvg>
);

/* ---------- page ---------- */

const Info = () => <DotsCircle size={36} stroke={2} color="#999" r={2} />;

const TABS = ["分时", "五日", "日K", "周K", "月K"];

export default function App() {
  const [tab, setTab] = useState("日K");
  const [from, setFrom] = useState(0);
  const [to, setTo] = useState(100);

  return (
    <Page lang="zh-CN">
      <GlobalStyle />
      <StatusBar>
        <StatusGroup $gap={16}>
          <Clock>11:10</Clock>
          <ScissorsIcon />
          <AppBadge $bg="#1677ff" $radius={4} $size={25}>支</AppBadge>
          <RobotIcon />
          <ClipIcon />
        </StatusGroup>
        <StatusGroup $gap={12}>
          <AppBadge $bg="#666666" $radius={8} $size={19}>HD</AppBadge>
          <SignalIcon />
          <WifiIcon />
          <Percent>56%</Percent>
          <BatteryIcon />
        </StatusGroup>
      </StatusBar>

      <TitleBar>
        <TitleSide $gap={26}>
          <IconButton aria-label="返回">
            <Chevron w={38} h={62} stroke={6} color="#333" />
          </IconButton>
          <Logo href="#home">东方<br />财富</Logo>
        </TitleSide>
        <TitleCenter>
          <StockName>星源材质<NameBadge>企</NameBadge></StockName>
          <CodeRow>
            300568
            <CodeTag $open>深股通</CodeTag>
            <CodeTag>L2</CodeTag>
            <CodeArrow $w={24} $h={16} $color="#cccccc" />
          </CodeRow>
        </TitleCenter>
        <TitleSide $gap={48} $end>
          <AiRound aria-label="Ai"><AiMark /></AiRound>
          <IconButton aria-label="分享"><ShareIcon /></IconButton>
          <IconButton aria-label="搜索"><SearchIcon /></IconButton>
        </TitleSide>
      </TitleBar>

      <Quote>
        <PriceBlock>
          <Price>16.22</Price>
          <Change><span>9.01%</span><span>1.34</span></Change>
        </PriceBlock>
        <Metric><MetricLabel>今开</MetricLabel><MetricValue $size={48} $red>15.19</MetricValue></Metric>
        <Metric><MetricLabel>最高</MetricLabel><MetricValue $size={48} $red>16.30</MetricValue></Metric>
        <Metric><MetricLabel>最低</MetricLabel><MetricValue $size={48} $red>14.97</MetricValue></Metric>
        <Metric><MetricLabel>换手<Info /></MetricLabel><MetricValue $size={36}>7.91%</MetricValue></Metric>
        <Metric><MetricLabel>总手</MetricLabel><MetricValue $size={38}>96.50万</MetricValue></Metric>
        <Metric><MetricLabel>金额</MetricLabel><MetricValue $size={38}>15.06亿</MetricValue></Metric>
        <Metric><MetricLabel>总值<Info /></MetricLabel><MetricValue $size={28}>218.7亿</MetricValue></Metric>
        <Metric><MetricLabel>流值</MetricLabel><MetricValue $size={38}>197.9亿</MetricValue></Metric>
        <Metric><MetricLabel>市盈<Sup>动</Sup><Info /></MetricLabel><MetricValue $size={24}>143.34</MetricValue></Metric>
        <MoreButton>更多</MoreButton>
      </Quote>

      <GdrRow>
        <span>GDR报价:</span>
        <GdrValue>9.450</GdrValue>
        <GdrValue>0.00%</GdrValue>
        <GdrLink href="#gdr">
          <HelpIcon />
          <GdrFormula>(A/GDR)比价=<Ratio>0.05</Ratio></GdrFormula>
          <Chevron w={18} h={30} stroke={2} color="#aaa" right />
        </GdrLink>
      </GdrRow>

      <Tabs>
        {TABS.map((t) => (
          <Tab key={t} $on={t === tab} onClick={() => setTab(t)}>{t}</Tab>
        ))}
        <Tab>更多<Triangle $w={17} $h={13} $color="#666" /></Tab>
        <Tab aria-label="设置"><GearIcon /></Tab>
      </Tabs>

      <IndicatorRow $h={69} $size={35} $gap={10}>
        <SelectBox $w={119}>
          <Select $pad={8} aria-label="主图指标"><option>均线</option></Select>
          <SelectArrow $w={17} $h={14} $color="#666" />
        </SelectBox>
        <Reading $color={C.ink} $gap={7}>MA5:15.14<ArrowIcon /></Reading>
        <Reading $color={C.amber} $gap={7}>10:14.65<ArrowIcon /></Reading>
        <Reading $color={C.magenta} $gap={7}>20:15.16<ArrowIcon /></Reading>
        <SelectBox $w={141} $push>
          <Select $pad={8} aria-label="买卖点"><option>DK点</option></Select>
          <CornerMark />
        </SelectBox>
        <AdjustButton>不复权</AdjustButton>
      </IndicatorRow>

      <ChartArea>
        <PriceChart />
        <ChartControls>
          <RoundButton aria-label="最左"><DoubleChevron /></RoundButton>
          <RoundButton aria-label="缩小"><PlusMinus /></RoundButton>
          <RoundButton aria-label="放大"><PlusMinus plus /></RoundButton>
          <RoundButton aria-label="向左"><Chevron w={24} h={36} stroke={3} color={C.orange} /></RoundButton>
          <RoundButton aria-label="向右" $grey><Chevron w={24} h={36} stroke={3} color="#666" right /></RoundButton>
          <RoundButton aria-label="全屏"><ExpandIcon /></RoundButton>
        </ChartControls>
      </ChartArea>

      <IndicatorRow $h={68} $size={46} $gap={4}>
        <SelectBox $w={165}>
          <Select $pad={2} aria-label="副图指标"><option>换手率</option></Select>
          <SelectArrow $w={17} $h={14} $color="#666" />
        </SelectBox>
        <Reading $color={C.ink} $gap={12}>7.910<ArrowIcon big /></Reading>
        <Reading $color={C.amber} $gap={12}>&nbsp;MA1:5.670<ArrowIcon big /></Reading>
        <Reading $color={C.violet} $gap={12}>&nbsp;MA2:5.420<ArrowIcon big down /></Reading>
        <CollapseButton aria-label="收起"><Chevron w={22} h={34} stroke={5} color="#fff" /></CollapseButton>
      </IndicatorRow>

      <ChartArea>
        <VolumeChart />
      </ChartArea>

      <Range>
        <RangeInput type="range" aria-label="起始日期" min={0} max={100} value={from} onChange={(e) => setFrom(Math.min(to, Number(e.target.value)))} />
        <RangeInput type="range" aria-label="结束日期" min={0} max={100} value={to} onChange={(e) => setTo(Math.max(from, Number(e.target.value)))} />
      </Range>

      <Assistant>
        <AskCard onSubmit={(e) => e.preventDefault()}>
          <AskLogo>问Ai</AskLogo>
          <AskInput type="text" aria-label="问Ai" placeholder="L3级智驾准入许可发放！长安V⋯" />
          <AskSend type="submit" aria-label="发送"><SendArrow /></AskSend>
        </AskCard>
      </Assistant>

      <NoticeWrap>
        <Notice>
          <MegaphoneIcon />
          <NoticeText href="#notice">一键上车A500指数，行业配置更加均衡！</NoticeText>
          <NoticeRule />
          <IconButton aria-label="关闭"><CloseIcon /></IconButton>
        </Notice>
      </NoticeWrap>

      <BottomBar>
        <IndexCell>
          <Triangle $w={22} $h={8} $color="#777" $up />
          <IndexValue>3976.00</IndexValue>
          <IndexChange>上证<IndexPct>0.41%</IndexPct></IndexChange>
        </IndexCell>
        <Action><TradeIcon />交易</Action>
        <Action><PostIcon />发帖</Action>
        <Action><GridIcon />功能</Action>
        <Action><DotsCircle size={66} stroke={3} color="#666" r={3} />设自选</Action>
      </BottomBar>

      <SystemNav>
        <IconButton aria-label="菜单"><MenuIcon /></IconButton>
        <IconButton aria-label="主页"><HomeIcon /></IconButton>
        <IconButton aria-label="后退"><BackIcon /></IconButton>
      </SystemNav>
    </Page>
  );
}
